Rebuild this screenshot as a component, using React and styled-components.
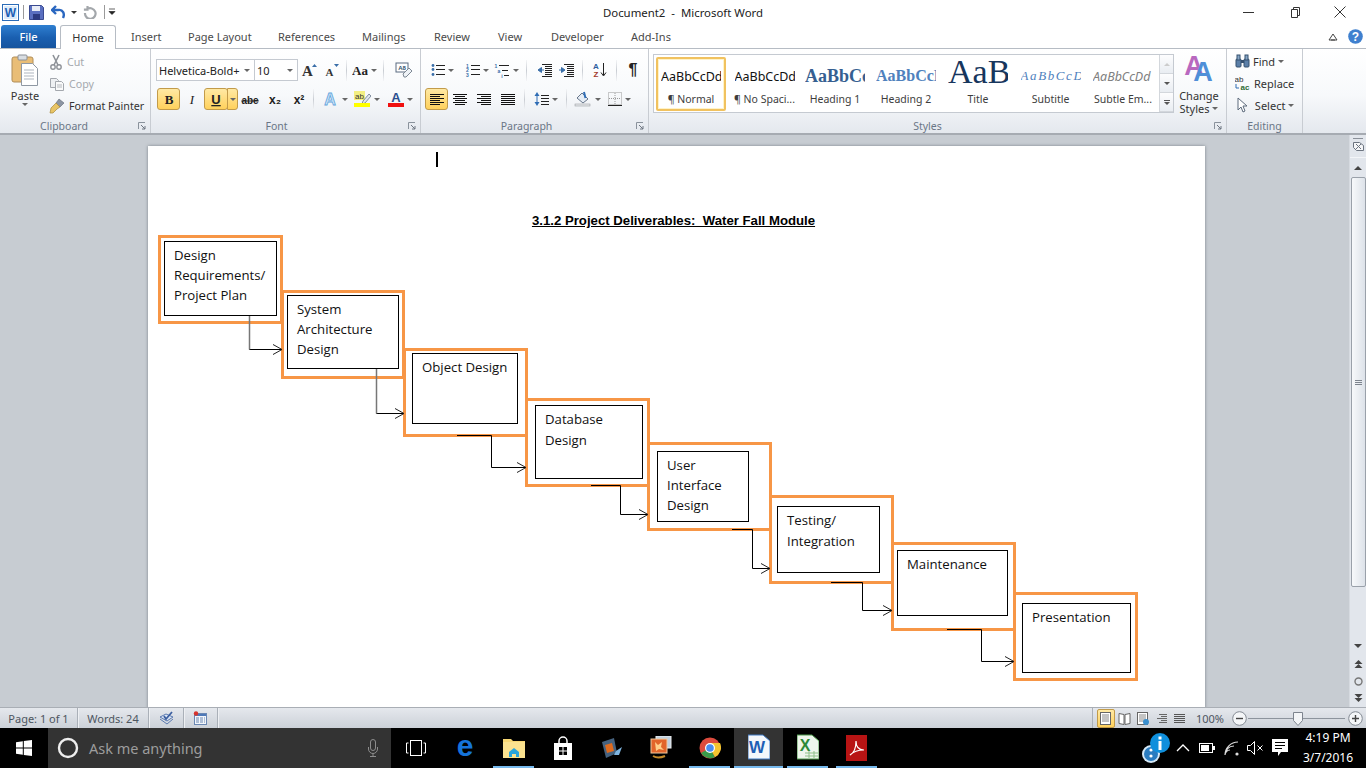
import React from 'react';
import styled, { createGlobalStyle } from 'styled-components';

const uiFont = `'Noto Sans', 'Open Sans', sans-serif`;

const GlobalStyle = createGlobalStyle`
  html, body { margin: 0; padding: 0; width: 1366px; height: 768px; overflow: hidden; background: #fff; }
  body { font-family: ${uiFont}; font-size: 11px; color: #444; }
  * { box-sizing: border-box; }
  svg { display: block; flex: none; }
`;

const Shell = styled.div`
  width: 1366px;
  height: 768px;
  display: flex;
  flex-direction: column;
`;

/* title bar */
const TitleBar = styled.header`
  height: 24px;
  display: grid;
  grid-template-columns: 1fr auto 1fr;
  align-items: center;
  background: #fff;
`;
const Qat = styled.div`
  display: flex;
  align-items: center;
  padding-left: 1px;
`;
const QatSlot = styled.span`
  width: ${p => p.$w}px;
  display: flex;
  justify-content: center;
  align-items: center;
`;
const QatSep = styled.span`
  width: 1px;
  height: 14px;
  margin: 0 ${p => p.$m || 5}px;
  background: #9a9a9a;
`;
const DocTitle = styled.div`
  font-size: 11.4px;
  color: #222;
  white-space: pre;
`;
const WinControls = styled.div`
  display: flex;
  justify-content: flex-end;
  align-items: center;
  padding-right: 3px;
`;
const WinButton = styled.span`
  width: 46px;
  height: 24px;
  display: flex;
  align-items: center;
  justify-content: center;
`;

/* tabs */
const TabRow = styled.nav`
  height: 24px;
  display: flex;
  align-items: flex-end;
  background: #fff;
  position: relative;
  padding-left: 1px;
`;
const FileTab = styled.div`
  width: 55px;
  height: 23px;
  margin-right: 4px;
  border-radius: 3px 3px 0 0;
  background: linear-gradient(#2f7fd0, #1a5fb0 55%, #16549e);
  color: #fff;
  font-size: 11px;
  font-weight: 500;
  display: flex;
  align-items: center;
  justify-content: center;
`;
const Tab = styled.div`
  height: ${p => (p.$active ? 24 : 23)}px;
  width: ${p => p.$w}px;
  display: flex;
  align-items: center;
  justify-content: ${p => (p.$active ? 'center' : 'flex-start')};
  font-size: 11px;
  color: #4a4a4a;
  ${p => p.$active && `
    background: #fff;
    border: 1px solid #b6bcc4;
    border-bottom: none;
    border-radius: 3px 3px 0 0;
    color: #333;
    margin-right: 15px;
    margin-bottom: -1px;
    position: relative;
    z-index: 1;
  `}
`;
const TabTail = styled.div`
  margin-left: auto;
  height: 23px;
  display: flex;
  align-items: center;
  gap: 10px;
  padding-right: 3px;
`;

/* ribbon */
const Ribbon = styled.section`
  height: 87px;
  display: flex;
  border-top: 1px solid #b6bcc4;
  border-bottom: 2px solid #a6abb2;
  background: linear-gradient(#fff, #f7f9fb 55%, #e4e8ee);
`;
const Group = styled.div`
  width: ${p => p.$w}px;
  flex: none;
  display: flex;
  flex-direction: column;
  border-right: 1px solid #c8ccd2;
  position: relative;
`;
const GroupBody = styled.div`
  flex: 1;
  min-height: 0;
  display: flex;
  ${p => p.$col && 'flex-direction: column;'}
  padding: ${p => p.$pad || '0'};
  gap: ${p => p.$gap || 0}px;
`;
const GroupLabel = styled.div`
  height: 15px;
  margin-bottom: -1px;
  line-height: 14px;
  text-align: center;
  font-size: 10.5px;
  color: #6a7686;
  padding-right: ${p => p.$shift || 0}px;
`;
const Launcher = styled.span`
  position: absolute;
  right: 4px;
  bottom: 3px;
`;
const PasteButton = styled.div`
  width: 48px;
  display: flex;
  flex-direction: column;
  align-items: center;
  padding-top: 5px;
  font-size: 11px;
  color: #333;
`;
const PasteLabel = styled.span`
  margin-top: 3px;
  line-height: 14px;
`;
const ClipList = styled.div`
  display: flex;
  flex-direction: column;
  padding-top: 2px;
`;
const ClipItem = styled.div`
  height: 22px;
  display: flex;
  align-items: center;
  gap: 4px;
  color: ${p => (p.$dim ? '#a5a9ae' : '#333')};
  font-size: 10.7px;
  white-space: nowrap;
`;
const ToolRow = styled.div`
  height: ${p => p.$h || 22}px;
  display: flex;
  align-items: center;
`;
const Combo = styled.div`
  width: ${p => p.$w}px;
  height: 22px;
  border: 1px solid #c5cad1;
  background: #fff;
  margin-left: -1px;
  display: flex;
  align-items: center;
  justify-content: space-between;
  padding: 0 4px 0 2px;
  font-size: 11px;
  color: #222;
  white-space: nowrap;
`;
const Tool = styled.span`
  width: ${p => p.$w || 22}px;
  height: 22px;
  flex: none;
  display: flex;
  align-items: center;
  justify-content: center;
  gap: 3px;
  ${p => p.$on && `
    background: linear-gradient(#ffe9a4, #ffd15c);
    border: 1px solid #c29b4a;
    border-radius: 3px;
  `}
`;
const ToolSplit = styled.span`
  width: 11px;
  height: 22px;
  margin-left: -1px;
  display: flex;
  align-items: center;
  justify-content: center;
  background: linear-gradient(#ffe9a4, #ffd15c);
  border: 1px solid #c29b4a;
  border-radius: 0 3px 3px 0;
`;
const Sep = styled.span`
  width: 1px;
  height: 21px;
  flex: none;
  margin: 0 ${p => p.$m || 6}px;
  background: linear-gradient(#f4f5f7, #c9cdd3 50%, #f4f5f7);
`;
const Caret = styled.span`
  width: 0;
  height: 0;
  flex: none;
  border-left: ${p => p.$size || 3}px solid transparent;
  border-right: ${p => p.$size || 3}px solid transparent;
  ${p => (p.$up ? 'border-bottom' : 'border-top')}: ${p => p.$size || 3}px solid ${p => p.$c || '#666'};
`;
const Gallery = styled.div`
  width: 521px;
  height: 59px;
  margin: 5px 0 0 4px;
  border: 1px solid #c5cad1;
  background: #fff;
  display: flex;
  padding: 2px 0 0 2px;
`;
const StyleItem = styled.div`
  width: ${p => p.$w}px;
  height: 54px;
  flex: none;
  display: flex;
  flex-direction: column;
  align-items: center;
  overflow: hidden;
  padding-top: 3px;
  ${p => p.$on && `
    padding-top: 1px;
    margin-right: 3px;
    border: 2px solid #f1c25f;
    box-shadow: inset 0 0 0 1px #fff3c9;
    border-radius: 2px;
  `}
`;
const StyleSample = styled.div`
  height: 32px;
  width: 60px;
  flex: none;
  display: flex;
  align-items: center;
  justify-content: flex-start;
  overflow: hidden;
  white-space: nowrap;
  padding-bottom: ${p => p.$lift || 0}px;
  color: ${p => p.$c || '#111'};
  font-family: ${p => p.$f || `'Noto Sans', sans-serif`};
  font-size: ${p => p.$s || 12}px;
  font-weight: ${p => (p.$b ? 700 : 400)};
  font-style: ${p => (p.$i ? 'italic' : 'normal')};
  letter-spacing: ${p => p.$ls || 0}px;
`;
const StyleName = styled.div`
  font-size: 10.5px;
  line-height: 14px;
  color: #3d3d3d;
  white-space: nowrap;
`;
const GalleryScroll = styled.div`
  width: 14px;
  margin: -2px 0 0 auto;
  display: flex;
  flex-direction: column;
  border-left: 1px solid #d3d7dc;
`;
const GalleryBtn = styled.span`
  flex: 1;
  display: flex;
  align-items: center;
  justify-content: center;
  flex-direction: column;
  gap: 1px;
  background: linear-gradient(#fdfdfe, #e9edf2);
  border-bottom: 1px solid #d3d7dc;
`;
const ChangeStyles = styled.div`
  width: 50px;
  display: flex;
  flex-direction: column;
  align-items: center;
  padding-top: 4px;
  font-size: 11px;
  line-height: 13px;
  color: #333;
  text-align: center;
`;
const ChangeText = styled.span`
  margin-top: 7px;
  display: flex;
  flex-direction: column;
  align-items: center;
`;
const InlineCaret = styled.span`
  display: flex;
  align-items: center;
  gap: 3px;
`;
const EditItem = styled.div`
  height: 22px;
  display: flex;
  align-items: center;
  gap: 3px;
  font-size: 11px;
  color: #333;
`;

/* document */
const Workspace = styled.main`
  flex: 1;
  min-height: 0;
  display: flex;
  background: #c7ccd2;
`;
const DocArea = styled.div`
  flex: 1;
  padding: 11px 0 0 148px;
  overflow: hidden;
`;
const Page = styled.div`
  width: 1057px;
  height: 600px;
  background: #fff;
  box-shadow: 0 0 3px rgba(60, 70, 80, .55);
  position: relative;
`;
const Caretbar = styled.span`
  position: absolute;
  left: 288px;
  top: 6px;
  width: 2px;
  height: 15px;
  background: #000;
`;
const Heading = styled.h3`
  position: absolute;
  left: 0;
  right: 0;
  top: 67px;
  margin: 0;
  padding-right: 6px;
  text-align: center;
  font: 700 13.2px/15px 'Liberation Sans', Arial, sans-serif;
  text-decoration: underline;
  color: #000;
  white-space: pre;
`;
const Frame = styled.div`
  position: absolute;
  left: ${p => p.$x}px;
  top: ${p => p.$y}px;
  width: ${p => p.$w}px;
  height: 89px;
  border: 3px solid #f79646;
`;
const Inner = styled.div`
  position: absolute;
  left: ${p => p.$x}px;
  top: ${p => p.$y}px;
  width: ${p => p.$w}px;
  height: ${p => p.$h}px;
  border: 1px solid #000;
  background: #fff;
  padding: 3px 0 0 9px;
  font: 13.2px/${p => p.$lh || 20}px 'Open Sans', 'Noto Sans', sans-serif;
  color: #111;
  white-space: pre;
`;
const Wires = styled.svg`
  position: absolute;
  left: 0;
  top: 0;
`;
const VScroll = styled.aside`
  width: 17px;
  flex: none;
  display: flex;
  flex-direction: column;
  align-items: center;
  background: #e2e6ec;
  border-left: 1px solid #d6dae0;
`;
const RulerToggle = styled.div`
  width: 100%;
  height: 23px;
  display: flex;
  flex-direction: column;
  align-items: center;
  gap: 2px;
  padding-top: 3px;
  border-bottom: 1px solid #f3f5f8;
`;
const ScrollBtn = styled.div`
  width: 100%;
  height: ${p => p.$h || 16}px;
  display: flex;
  align-items: center;
  justify-content: center;
`;
const Thumb = styled.div`
  width: 15px;
  height: 410px;
  border: 1px solid #9aa1aa;
  border-radius: 2px;
  background: linear-gradient(90deg, #f7f9fb, #dde2e9);
  display: flex;
  align-items: center;
  justify-content: center;
`;
const ScrollFill = styled.div`
  flex: 1;
`;

/* status bar */
const StatusBar = styled.footer`
  height: 21px;
  display: flex;
  align-items: center;
  background: linear-gradient(#e5e8ed, #ccd1d8);
  border-top: 1px solid #a9aeb5;
  font-size: 11px;
  color: #4d5560;
`;
const StatusCell = styled.span`
  height: 100%;
  display: flex;
  align-items: center;
  justify-content: center;
  width: ${p => p.$w}px;
  border-right: 1px solid #aab0b8;
  box-shadow: 1px 0 0 #eef0f3;
`;
const ViewGroup = styled.div`
  margin-left: auto;
  height: 100%;
  display: flex;
  align-items: center;
  border-left: 1px solid #aab0b8;
  padding: 0 3px 0 4px;
`;
const ViewBtn = styled.span`
  width: 18.5px;
  height: 19px;
  display: flex;
  align-items: center;
  justify-content: center;
  ${p => p.$on && `
    background: linear-gradient(#ffe9a4, #ffd15c);
    border: 1px solid #c29b4a;
    border-radius: 2px;
  `}
`;
const Zoom = styled.span`
  width: 40px;
  margin: 0 2px 0 1px;
  text-align: center;
  font-size: 11px;
`;
const ZoomTrack = styled.div`
  width: 97px;
  height: 17px;
  margin: 0 3px 0 1px;
  display: flex;
  align-items: center;
`;
const ZoomLine = styled.div`
  flex: 1;
  height: 1px;
  background: #8d949d;
  position: relative;
`;
const ZoomThumb = styled.span`
  position: absolute;
  left: 45px;
  top: -6px;
`;

/* taskbar */
const Taskbar = styled.div`
  height: 40px;
  display: flex;
  align-items: center;
  background: #000;
`;
const StartBtn = styled.div`
  width: 48px;
  height: 40px;
  display: flex;
  align-items: center;
  justify-content: center;
`;
const SearchBox = styled.div`
  width: 343px;
  height: 40px;
  display: flex;
  align-items: center;
  background: #333;
  color: #9d9d9d;
  font-size: 14.5px;
  padding: 0 12px 0 9px;
`;
const SearchText = styled.span`
  margin-left: 10px;
  flex: 1;
`;
const TaskItem = styled.div`
  width: 49px;
  height: 40px;
  display: flex;
  align-items: center;
  justify-content: center;
  position: relative;
  ${p => p.$current && 'background: #333;'}
  ${p => p.$open && `
    &::after {
      content: '';
      position: absolute;
      left: ${p.$current ? 0 : 4}px;
      right: ${p.$current ? 0 : 4}px;
      bottom: 0;
      height: 2px;
      background: #76b9ed;
    }
  `}
`;
const Tray = styled.div`
  margin-left: auto;
  height: 40px;
  display: flex;
  align-items: center;
  color: #fff;
`;
const TraySlot = styled.span`
  width: ${p => p.$w || 24}px;
  display: flex;
  align-items: center;
  justify-content: center;
`;
const Clock = styled.div`
  width: 66px;
  margin-left: 2px;
  margin-right: 5px;
  text-align: center;
  font-size: 12px;
  line-height: 20px;
  color: #fff;
`;

/* icons */
const Svg = ({ w = 16, h = 16, children }) => (
  <svg width={w} height={h} viewBox={`0 0 ${w} ${h}`}>{children}</svg>
);
const Lines = ({ rows, c = '#222', w = 16, h = 16, children }) => (
  <Svg w={w} h={h}>
    {children}
    {rows.map(([a, b, y], i) => <rect key={i} x={a} y={y} width={b - a} height="1" fill={c} />)}
  </Svg>
);
const WordLogo = () => (
  <Svg w={17} h={17}>
    <rect x=".5" y=".5" width="16" height="16" fill="#fff" stroke="#2b6cb8" />
    <rect x="2" y="2" width="13" height="13" fill="#dcebfa" />
    <text x="8.5" y="13" textAnchor="middle" fontFamily="Liberation Sans" fontWeight="700" fontSize="12" fill="#1d5fb5">W</text>
  </Svg>
);
const Launch = () => (
  <Svg w={8} h={8}>
    <path d="M.5 7V.5H7" fill="none" stroke="#8a929c" />
    <path d="M3 3l4 4M7 4v3H4" fill="none" stroke="#6d7580" />
  </Svg>
);
const ClipboardIcon = () => (
  <Svg w={28} h={32}>
    <rect x="1" y="3" width="21" height="25" rx="2" fill="#e9bd76" stroke="#b08d58" />
    <rect x="7" y="1" width="9" height="5" rx="1" fill="#d8dde2" stroke="#8a8f96" />
    <path d="M10.5 9.5h11l5 5v17h-16z" fill="#fff" stroke="#8f98a3" />
    <path d="M13 16h10M13 19h10M13 22h10M13 25h10" stroke="#aeb5bf" />
  </Svg>
);
const Scissors = () => (
  <Svg w={14} h={16}>
    <path d="M4 1l5 10M10 1L5 11" stroke="#8e9298" strokeWidth="1.6" fill="none" />
    <circle cx="4" cy="13" r="2.2" fill="none" stroke="#8e9298" strokeWidth="1.4" />
    <circle cx="10" cy="13" r="2.2" fill="none" stroke="#8e9298" strokeWidth="1.4" />
  </Svg>
);
const CopyIcon = () => (
  <Svg w={16} h={14}>
    <path d="M1.5 1.5h6l2 2v7h-8z" fill="#eef0f2" stroke="#a4a8ae" />
    <path d="M6.5 4.5h6l2 2v7h-8z" fill="#fafafa" stroke="#a4a8ae" />
    <path d="M8 8h5M8 10h5" stroke="#b4b8bd" />
  </Svg>
);
const Brush = () => (
  <Svg w={16} h={16}>
    <path d="M10 1l5 4-4 4-4-4z" fill="#8c95a3" stroke="#5f6874" strokeWidth=".6" />
    <path d="M7 5l4 4-3 2-4 4H1l1-5z" fill="#e8c465" stroke="#a88a3c" strokeWidth=".7" />
  </Svg>
);
const TextGlyph = ({ t, s = 14, b, i, u, c = '#222', f = 'Liberation Serif', w = 16, strike, y = 13 }) => (
  <Svg w={w} h={16}>
    <text x={w / 2} y={y} textAnchor="middle" fontFamily={f} fontWeight={b ? 700 : 400} fontStyle={i ? 'italic' : 'normal'} fontSize={s} fill={c} textDecoration={u ? 'underline' : strike ? 'line-through' : 'none'}>{t}</text>
  </Svg>
);
const GrowA = ({ up }) => (
  <Svg w={16} h={16}>
    <text x="6.5" y="14" textAnchor="middle" fontFamily="Liberation Serif" fontWeight="700" fontSize={up ? 15 : 11} fill="#333">A</text>
    <path d={up ? 'M11 5l2.5-3L16 5z' : 'M11 2h5l-2.5 3z'} fill="#3a6ea8" />
  </Svg>
);
const EraserIcon = () => (
  <Svg w={18} h={16}>
    <rect x="1" y="1" width="12" height="9" fill="#fff" stroke="#5a6b80" />
    <text x="7" y="8" textAnchor="middle" fontFamily="Liberation Sans" fontSize="6" fontWeight="700" fill="#33506e">A8</text>
    <path d="M8 12l6-6 3 3-6 6H9z" fill="#eef2f6" stroke="#7d8894" />
  </Svg>
);
const Bullets = () => (
  <Lines w={14} h={14} rows={[[5, 14, 2], [5, 14, 6], [5, 14, 11]]}>
    <circle cx="2" cy="2.5" r="1.4" fill="#3a6ea8" />
    <circle cx="2" cy="6.5" r="1.4" fill="#3a6ea8" />
    <circle cx="2" cy="11.5" r="1.4" fill="#3a6ea8" />
  </Lines>
);
const Numbered = () => (
  <Lines w={15} h={14} rows={[[6, 15, 2], [6, 15, 6], [6, 15, 11]]}>
    <text x="2.5" y="5" textAnchor="middle" fontSize="5" fontWeight="700" fontFamily="Liberation Sans" fill="#3a6ea8">1</text>
    <text x="2.5" y="9" textAnchor="middle" fontSize="5" fontWeight="700" fontFamily="Liberation Sans" fill="#3a6ea8">2</text>
    <text x="2.5" y="14" textAnchor="middle" fontSize="5" fontWeight="700" fontFamily="Liberation Sans" fill="#3a6ea8">3</text>
  </Lines>
);
const Multi = () => (
  <Lines w={16} h={15} rows={[[5, 15, 2], [8, 14, 7], [10, 15, 12]]}>
    <text x="2" y="5" textAnchor="middle" fontSize="5" fontWeight="700" fontFamily="Liberation Sans" fill="#3a6ea8">1</text>
    <text x="5" y="10" textAnchor="middle" fontSize="5" fontWeight="700" fontFamily="Liberation Sans" fill="#3a6ea8">a</text>
    <text x="8" y="15" textAnchor="middle" fontSize="5" fontWeight="700" fontFamily="Liberation Sans" fill="#3a6ea8">i</text>
  </Lines>
);
const IndentIcon = ({ flip }) => (
  <Lines w={15} h={14} rows={[[5, 15, 1], [8, 15, 3], [8, 15, 5], [8, 15, 7], [8, 15, 9], [8, 15, 11], [5, 15, 13]]}>
    <path d={flip ? 'M0 7h4M2.5 4.5L6 7l-3.5 2.5z' : 'M7 7H3M4.5 4.5L1 7l3.5 2.5z'} fill="#3a6ea8" stroke="#3a6ea8" />
  </Lines>
);
const SortIcon = () => (
  <Svg w={16} h={16}>
    <text x="5" y="7" textAnchor="middle" fontFamily="Liberation Sans" fontWeight="700" fontSize="8" fill="#2d5f9e">A</text>
    <text x="5" y="15" textAnchor="middle" fontFamily="Liberation Sans" fontWeight="700" fontSize="8" fill="#a33a2b">Z</text>
    <path d="M12.5 1v12M10 10.5l2.5 3.5 2.5-3.5" fill="none" stroke="#222" />
  </Svg>
);
const Align = ({ rows }) => <Lines w={16} h={13} rows={rows} c="#111" />;
const leftRows = [[1, 15, 1], [1, 11, 3], [1, 15, 5], [1, 11, 7], [1, 15, 9], [1, 11, 11]];
const centerRows = [[1, 15, 1], [3, 13, 3], [1, 15, 5], [3, 13, 7], [1, 15, 9], [3, 13, 11]];
const rightRows = [[1, 15, 1], [5, 15, 3], [1, 15, 5], [5, 15, 7], [1, 15, 9], [5, 15, 11]];
const justRows = [[1, 15, 1], [1, 15, 3], [1, 15, 5], [1, 15, 7], [1, 15, 9], [1, 15, 11]];
const LineSpacing = () => (
  <Lines w={15} h={16} rows={[[7, 15, 4], [7, 15, 7], [7, 15, 10], [7, 15, 13]]}>
    <path d="M3 1l2.5 4h-5zM3 15l2.5-4h-5z" fill="#2f6db5" />
    <path d="M3 4v8" stroke="#2f6db5" />
  </Lines>
);
const Shading = () => (
  <Svg w={18} h={16}>
    <path d="M8 2l6 6-5 4-6-5z" fill="#e6edf5" stroke="#66758a" />
    <path d="M10 1l1.5 6" stroke="#2f6db5" strokeWidth="2" />
    <rect x="1" y="13" width="15" height="2" fill="#e8eaec" stroke="#8b8f95" strokeWidth=".5" />
  </Svg>
);
const BorderIcon = () => (
  <Svg w={14} h={14}>
    <rect x=".5" y=".5" width="13" height="12" fill="none" stroke="#999" strokeDasharray="1 1" />
    <path d="M7 1v12M1 6.5h12" stroke="#999" strokeDasharray="1 1" />
    <path d="M0 13.5h14" stroke="#222" />
  </Svg>
);
const TextEffects = () => (
  <Svg w={18} h={16}>
    <text x="9" y="14" textAnchor="middle" fontFamily="Liberation Sans" fontWeight="700" fontSize="16" fill="#cfe5f8" stroke="#63a5dc" strokeWidth=".8">A</text>
  </Svg>
);
const Highlight = () => (
  <Svg w={17} h={16}>
    <rect x="0" y="0" width="11" height="9" fill="#f3ef82" />
    <text x="5.5" y="8" textAnchor="middle" fontFamily="Liberation Sans" fontSize="8" fill="#333">ab</text>
    <path d="M9 10l6-7 2 2-6 7-3 1z" fill="#dfe6ee" stroke="#56677d" strokeWidth=".7" />
    <rect x="0" y="12" width="16" height="4" fill="#ffff00" />
  </Svg>
);
const FontColor = () => (
  <Svg w={16} h={16}>
    <text x="8" y="11" textAnchor="middle" fontFamily="Liberation Sans" fontWeight="700" fontSize="13" fill="#2a4f8f">A</text>
    <rect x="0" y="12" width="16" height="4" fill="#f01010" />
  </Svg>
);
const ChangeStylesIcon = () => (
  <Svg w={32} h={29}>
    <text x="11" y="22" textAnchor="middle" fontFamily="Liberation Sans" fontWeight="700" fontSize="27" fill="#b868bf">A</text>
    <text x="20" y="28" textAnchor="middle" fontFamily="Liberation Sans" fontWeight="700" fontSize="27" fill="#4f8fd8">A</text>
  </Svg>
);
const Binoculars = () => (
  <Svg w={15} h={15}>
    <rect x="1" y="5" width="5" height="8" rx="1" fill="#5b7fa8" stroke="#35506f" />
    <rect x="9" y="5" width="5" height="8" rx="1" fill="#5b7fa8" stroke="#35506f" />
    <rect x="2" y="1" width="3" height="5" fill="#87a6c6" stroke="#35506f" />
    <rect x="10" y="1" width="3" height="5" fill="#87a6c6" stroke="#35506f" />
    <rect x="6" y="6" width="3" height="3" fill="#35506f" />
  </Svg>
);
const ReplaceIcon = () => (
  <Svg w={16} h={16}>
    <text x="4" y="7" textAnchor="middle" fontFamily="Liberation Sans" fontSize="8" fill="#333">ab</text>
    <text x="10" y="15" textAnchor="middle" fontFamily="Liberation Sans" fontWeight="700" fontSize="8" fill="#2e6a32">ac</text>
    <path d="M1 9v4h3" fill="none" stroke="#2f6db5" />
  </Svg>
);
const SelectIcon = () => (
  <Svg w={14} h={16}>
    <path d="M3 1v12l3-3 2 5 2-1-2-5h4z" fill="#fff" stroke="#5d6b7c" />
  </Svg>
);
const HelpIcon = () => (
  <Svg w={15} h={15}>
    <circle cx="7.5" cy="7.5" r="7.3" fill="#3f80cf" />
    <text x="7.5" y="12" textAnchor="middle" fontFamily="Liberation Sans" fontWeight="700" fontSize="12" fill="#fff">?</text>
  </Svg>
);
const PageView = ({ book, web, outline, draft }) => (
  <Lines w={13} h={13} c={draft ? '#555' : '#666'} rows={draft ? [[1, 12, 2], [1, 12, 4], [1, 12, 6], [1, 12, 8], [1, 12, 10]] : outline ? [[4, 12, 2], [6, 12, 4], [2, 12, 6], [6, 12, 8], [4, 12, 10]] : []}>
    {!draft && !outline && !book && <rect x="1.5" y=".5" width="10" height="12" fill="#fff" stroke="#666" />}
    {!draft && !outline && !book && <path d="M3 3h7M3 5h7M3 7h7M3 9h7" stroke="#888" />}
    {book && <path d="M1 1.5l5 1v10l-5-1zM12 1.5l-5 1v10l5-1z" fill="#fff" stroke="#666" />}
    {web && <circle cx="10" cy="10" r="3" fill="#3a8fcf" />}
  </Lines>
);
const ZoomCircle = ({ plus }) => (
  <Svg w={15} h={15}>
    <circle cx="7.5" cy="7.5" r="6.8" fill="#f4f6f8" stroke="#848b94" />
    <path d={plus ? 'M4 7.5h7M7.5 4v7' : 'M4 7.5h7'} stroke="#444" strokeWidth="1.4" />
  </Svg>
);
const ProofIcon = () => (
  <Svg w={17} h={16}>
    <path d="M2 7l6-3 7 3-6 4z" fill="#dbe5f4" stroke="#5b7ab0" />
    <path d="M2 9l7 5 6-5" fill="none" stroke="#5b7ab0" />
    <path d="M6 6l2 3 6-7" fill="none" stroke="#3c5fa0" strokeWidth="1.8" />
  </Svg>
);
const MacroIcon = () => (
  <Svg w={15} h={15}>
    <rect x="1.5" y="2.5" width="12" height="11" fill="#f3f6fa" stroke="#6a87b3" />
    <rect x="2" y="3" width="11" height="2" fill="#4d78b8" />
    <path d="M3 7h9M3 9h9M3 11h9" stroke="#6a87b3" strokeDasharray="3 1" />
    <circle cx="3" cy="2.5" r="2.2" fill="#d8332c" />
  </Svg>
);

/* taskbar icons */
const WinLogo = () => (
  <Svg w={16} h={16}>
    <path d="M0 2.2L6.8 1.2V7.5H0zM7.8 1L16 0V7.5H7.8zM0 8.5H6.8V14.8L0 13.8zM7.8 8.5H16V16L7.8 15z" fill="#fff" />
  </Svg>
);
const Cortana = () => (
  <Svg w={22} h={22}>
    <circle cx="11" cy="11" r="9" fill="none" stroke="#eee" strokeWidth="2.4" />
  </Svg>
);
const Mic = () => (
  <Svg w={12} h={20}>
    <rect x="3.5" y="1.5" width="5" height="11" rx="2.5" fill="none" stroke="#8d8d8d" />
    <path d="M1.5 9v2a4.5 4.5 0 009 0V9M6 15.5V18M3 18.5h6" fill="none" stroke="#8d8d8d" />
  </Svg>
);
const TaskView = () => (
  <Svg w={20} h={16}>
    <rect x="4.5" y=".5" width="11" height="15" fill="none" stroke="#fff" />
    <path d="M2.5 3H.5v10h2M17.5 3h2v10h-2" fill="none" stroke="#fff" />
  </Svg>
);
const Edge = () => (
  <Svg w={22} h={24}>
    <text x="11" y="20" textAnchor="middle" fontFamily="Liberation Sans" fontWeight="700" fontSize="30" fill="#1573d9">e</text>
  </Svg>
);
const Explorer = () => (
  <Svg w={22} h={20}>
    <path d="M0 1h8l2 2h12v17H0z" fill="#f7d774" />
    <rect x="0" y="4" width="22" height="16" fill="#fbe28f" />
    <path d="M6 19v-5l5-4 5 4v5h-3v-3H9v3z" fill="#2aa5dc" />
  </Svg>
);
const Store = () => (
  <Svg w={20} h={24}>
    <path d="M6 7V5a4 4 0 018 0v2" fill="none" stroke="#fff" strokeWidth="1.5" />
    <path d="M1 7h18v17H1z" fill="#fff" />
    <path d="M6 11h3.5v3.5H6zM10.5 11H14v3.5h-3.5zM6 15.5h3.5V19H6zM10.5 15.5H14V19h-3.5z" fill="#000" />
  </Svg>
);
const MovieMaker = () => (
  <Svg w={24} h={24}>
    <path d="M2 6l12-4 3 15-11 5z" fill="#46627e" />
    <path d="M5 9l7-2 2 8-7 2z" fill="#df6b1f" />
    <path d="M16 15l6-4-3 8h-5z" fill="#7fb5e0" />
  </Svg>
);
const PhotoIcon = () => (
  <Svg w={22} h={24}>
    <rect x="6" y="0" width="15" height="12" fill="#bfd0e0" stroke="#eee" />
    <rect x="1" y="3" width="16" height="14" fill="#e2652a" stroke="#eec9a0" />
    <path d="M5 6l3 3 4-3-1 5 3 3-5-1-3 2z" fill="#ffcf8a" />
    <path d="M3 20q5 3 12 0" fill="none" stroke="#c58b2a" strokeWidth="2" />
  </Svg>
);
const Chrome = () => (
  <Svg w={22} h={22}>
    <circle cx="11" cy="11" r="10.5" fill="#dd4b3e" />
    <path d="M11 11L2 16a10.5 10.5 0 0014 4z" fill="#3a9b4a" />
    <path d="M11 11l5 9A10.5 10.5 0 0021 6H11z" fill="#f4c430" />
    <circle cx="11" cy="11" r="5" fill="#fff" />
    <circle cx="11" cy="11" r="3.8" fill="#4a8cf0" />
  </Svg>
);
const WordTask = () => (
  <Svg w={22} h={28}>
    <path d="M0 1h15l7 6v18H0z" fill="#f4f7fb" stroke="#3f78c2" />
    <text x="9" y="19" textAnchor="middle" fontFamily="Liberation Sans" fontWeight="700" fontSize="17" fill="#1f5fb5">W</text>
  </Svg>
);
const ExcelTask = () => (
  <Svg w={22} h={28}>
    <path d="M0 1h15l7 6v18H0z" fill="#eef6ec" stroke="#4e9a4c" />
    <text x="8" y="17" textAnchor="middle" fontFamily="Liberation Sans" fontWeight="700" fontSize="16" fill="#2d8a39">X</text>
    <path d="M8 19h13M8 22h13M12 17v7M17 17v7" stroke="#8fc08a" />
  </Svg>
);
const AcrobatTask = () => (
  <Svg w={21} h={26}>
    <rect width="21" height="26" fill="#b81414" />
    <path d="M4 20c4-2 6-8 6-14 0 6 3 9 8 9-5 0-10 1-14 5z" fill="none" stroke="#fff" strokeWidth="1.2" />
  </Svg>
);
const InfoBadge = () => (
  <Svg w={28} h={36}>
    <circle cx="9" cy="24" r="9" fill="#d6e9f7" />
    <circle cx="9" cy="24" r="7" fill="#2a7cc0" />
    <circle cx="9" cy="20" r="1.6" fill="#fff" />
    <circle cx="9" cy="26" r="1.6" fill="#fff" />
    <circle cx="18" cy="13" r="10" fill="#0f8fdc" />
    <rect x="16.5" y="11" width="3" height="9" fill="#fff" />
    <rect x="16.5" y="6.5" width="3" height="3" fill="#fff" />
  </Svg>
);
const Chevron = () => (
  <Svg w={14} h={8}><path d="M1 7l6-6 6 6" fill="none" stroke="#fff" strokeWidth="1.3" /></Svg>
);
const Battery = () => (
  <Svg w={16} h={10}>
    <rect x=".5" y=".5" width="13" height="9" fill="none" stroke="#fff" />
    <rect x="2" y="2" width="8" height="6" fill="#fff" />
    <rect x="14" y="3" width="2" height="4" fill="#fff" />
  </Svg>
);
const Wifi = () => (
  <Svg w={15} h={15}>
    <path d="M1 14A13 13 0 0114 1M1 14A9 9 0 0110 5M1 14a5 5 0 015-5" fill="none" stroke="#ddd" strokeWidth="1.2" />
    <circle cx="13" cy="13" r="1.6" fill="#ddd" />
  </Svg>
);
const Mute = () => (
  <Svg w={17} h={14}>
    <path d="M.5 4.5h3l4-4v13l-4-4h-3z" fill="none" stroke="#fff" />
    <path d="M10.5 4.5l5 5M15.5 4.5l-5 5" stroke="#fff" />
  </Svg>
);
const Notify = () => (
  <Svg w={16} h={18}>
    <path d="M0 0h16v13H9l-3 4v-4H0z" fill="#fff" />
    <path d="M3 3.5h10M3 6.5h10M3 9.5h7" stroke="#000" />
  </Svg>
);

const serif = `'Liberation Serif', serif`;

const styleItems = [
  { name: '¶ Normal', sample: 'AaBbCcDd', on: true, w: 70, s: 12.5 },
  { name: '¶ No Spaci...', sample: 'AaBbCcDd', w: 71, s: 12.5 },
  { name: 'Heading 1', sample: 'AaBbCcDd', f: serif, s: 18, b: true, c: '#365f91', w: 70 },
  { name: 'Heading 2', sample: 'AaBbCcDd', f: serif, s: 16, b: true, c: '#4f81bd', w: 72 },
  { name: 'Title', sample: 'AaBbCc', f: serif, s: 34, c: '#17365d', w: 72, lift: 8 },
  { name: 'Subtitle', sample: 'AaBbCcDd', f: serif, s: 13, i: true, c: '#4f81bd', ls: 1.6, w: 73 },
  { name: 'Subtle Em...', sample: 'AaBbCcDd', s: 12.5, i: true, c: '#808080', w: 72 },
];

const frames = [
  { x: 10, y: 89, w: 125 },
  { x: 133, y: 144, w: 124 },
  { x: 255, y: 202, w: 125 },
  { x: 377, y: 252, w: 125 },
  { x: 499, y: 296, w: 125 },
  { x: 621, y: 349, w: 125 },
  { x: 743, y: 396, w: 125 },
  { x: 865, y: 446, w: 125 },
];

const boxes = [
  { x: 16, y: 95, w: 113, h: 75, text: 'Design\nRequirements/\nProject Plan' },
  { x: 139, y: 149, w: 112, h: 74, text: 'System\nArchitecture\nDesign' },
  { x: 264, y: 207, w: 106, h: 71, text: 'Object Design' },
  { x: 387, y: 259, w: 108, h: 74, lh: 21, text: 'Database\nDesign' },
  { x: 509, y: 305, w: 92, h: 71, text: 'User\nInterface\nDesign' },
  { x: 629, y: 360, w: 103, h: 67, lh: 21, text: 'Testing/\nIntegration' },
  { x: 749, y: 404, w: 111, h: 66, text: 'Maintenance' },
  { x: 874, y: 457, w: 109, h: 70, text: 'Presentation' },
];

// connector paths, page coordinates
const wires = [
  { d: 'M101.5 170V203.5H134', grey: true },
  { d: 'M228.5 223V267.5H256', grey: true },
  { d: 'M309 289.5H343.5V321.5H378' },
  { d: 'M443 339.5H472.5V368.5H500' },
  { d: 'M584 383.5H604.5V422.5H622' },
  { d: 'M683 436.5H714.5V464.5H744' },
  { d: 'M799 483.5H833.5V515.5H866' },
];
const arrowTips = [[134, 203.5], [256, 267.5], [378, 321.5], [500, 368.5], [622, 422.5], [744, 464.5], [866, 515.5]];

const Diagram = () => (
  <>
    {frames.map((f, i) => <Frame key={i} $x={f.x} $y={f.y} $w={f.w} />)}
    {boxes.map((b, i) => <Inner key={i} $x={b.x} $y={b.y} $w={b.w} $h={b.h} $lh={b.lh}>{b.text}</Inner>)}
    <Wires width="1057" height="600">
      {wires.map((w, i) => (
        <g key={i} fill="none" stroke="#000">
          <path d={w.d} />
          {w.grey && <path d={w.d.split('H')[0]} stroke="#777" strokeWidth="1.5" />}
        </g>
      ))}
      {arrowTips.map(([x, y], i) => (
        <path key={i} d={`M${x - 9} ${y - 5}L${x} ${y}L${x - 9} ${y + 5}`} fill="none" stroke="#222" />
      ))}
    </Wires>
  </>
);

const RibbonBar = () => (
  <Ribbon>
    <Group $w={151}>
      <GroupBody $pad="0 0 0 1px">
        <PasteButton>
          <ClipboardIcon />
          <PasteLabel>Paste</PasteLabel>
          <Caret />
        </PasteButton>
        <ClipList>
          <ClipItem $dim><Scissors />Cut</ClipItem>
          <ClipItem $dim><CopyIcon />Copy</ClipItem>
          <ClipItem><Brush />Format Painter</ClipItem>
        </ClipList>
      </GroupBody>
      <GroupLabel $shift={22}>Clipboard</GroupLabel>
      <Launcher><Launch /></Launcher>
    </Group>
    <Group $w={270}>
      <GroupBody $col $pad="10px 0 0 6px" $gap={7}>
        <ToolRow>
          <Combo $w={99}>Helvetica-Bold+<Caret /></Combo>
          <Combo $w={44}>10<Caret /></Combo>
          <Tool $w={22}><GrowA up /></Tool>
          <Tool $w={22}><GrowA /></Tool>
          <Sep $m={4} />
          <Tool $w={26}><TextGlyph t="Aa" s={13} b w={16} /><Caret /></Tool>
          <Sep $m={6} />
          <Tool $w={28}><EraserIcon /></Tool>
        </ToolRow>
        <ToolRow>
          <Tool $w={23} $on><TextGlyph t="B" s={13} b /></Tool>
          <Tool $w={24}><TextGlyph t="I" s={13} i /></Tool>
          <Tool $w={24} $on><TextGlyph t="U" s={13} b u c="#222" f="Liberation Sans" /></Tool>
          <ToolSplit><Caret /></ToolSplit>
          <Tool $w={23}><TextGlyph t="abe" s={10} strike f="Liberation Sans" b w={18} /></Tool>
          <Tool $w={28}><TextGlyph t="x₂" s={12} b f="Liberation Sans" w={18} /></Tool>
          <Tool $w={19}><TextGlyph t="x²" s={12} b f="Liberation Sans" w={18} /></Tool>
          <Sep $m={5} />
          <Tool $w={30}><TextEffects /><Caret /></Tool>
          <Tool $w={35}><Highlight /><Caret /></Tool>
          <Tool $w={33}><FontColor /><Caret /></Tool>
        </ToolRow>
      </GroupBody>
      <GroupLabel $shift={18}>Font</GroupLabel>
      <Launcher><Launch /></Launcher>
    </Group>
    <Group $w={228}>
      <GroupBody $col $pad="10px 0 0 4px" $gap={7}>
        <ToolRow>
          <Tool $w={35}><Bullets /><Caret /></Tool>
          <Tool $w={34}><Numbered /><Caret /></Tool>
          <Tool $w={25}><Multi /><Caret /></Tool>
          <Sep $m={6.5} />
          <Tool $w={22}><IndentIcon /></Tool>
          <Tool $w={22}><IndentIcon flip /></Tool>
          <Sep $m={5} />
          <Tool $w={22}><SortIcon /></Tool>
          <Sep $m={5.5} />
          <Tool $w={22}><TextGlyph t="¶" s={16} b f="Liberation Sans" /></Tool>
        </ToolRow>
        <ToolRow>
          <Tool $w={23} $on><Align rows={leftRows} /></Tool>
          <Tool $w={24}><Align rows={centerRows} /></Tool>
          <Tool $w={24}><Align rows={rightRows} /></Tool>
          <Tool $w={23}><Align rows={justRows} /></Tool>
          <Sep $m={5} />
          <Tool $w={32}><LineSpacing /><Caret /></Tool>
          <Sep $m={4} />
          <Tool $w={33}><Shading /><Caret /></Tool>
          <Tool $w={30}><BorderIcon /><Caret /></Tool>
        </ToolRow>
      </GroupBody>
      <GroupLabel $shift={16}>Paragraph</GroupLabel>
      <Launcher><Launch /></Launcher>
    </Group>
    <Group $w={578}>
      <GroupBody>
        <Gallery>
          {styleItems.map(s => (
            <StyleItem key={s.name} $on={s.on} $w={s.w}>
              <StyleSample $c={s.c} $f={s.f} $s={s.s} $b={s.b} $i={s.i} $ls={s.ls} $lift={s.lift}>{s.sample}</StyleSample>
              <StyleName>{s.name}</StyleName>
            </StyleItem>
          ))}
          <GalleryScroll>
            <GalleryBtn><Caret $up $c="#ccc" /></GalleryBtn>
            <GalleryBtn><Caret $c="#555" /></GalleryBtn>
            <GalleryBtn><Lines w={6} h={1} c="#555" rows={[[0, 6, 0]]} /><Caret $c="#555" /></GalleryBtn>
          </GalleryScroll>
        </Gallery>
        <ChangeStyles>
          <ChangeStylesIcon />
          <ChangeText>
            Change
            <InlineCaret>Styles <Caret /></InlineCaret>
          </ChangeText>
        </ChangeStyles>
      </GroupBody>
      <GroupLabel $shift={20}>Styles</GroupLabel>
      <Launcher><Launch /></Launcher>
    </Group>
    <Group $w={76}>
      <GroupBody $col $pad="1px 0 0 8px">
        <EditItem><Binoculars />Find <Caret /></EditItem>
        <EditItem><ReplaceIcon />Replace</EditItem>
        <EditItem><SelectIcon />&nbsp;Select <Caret /></EditItem>
      </GroupBody>
      <GroupLabel>Editing</GroupLabel>
    </Group>
  </Ribbon>
);

const App = () => (
  <Shell>
    <GlobalStyle />
    <TitleBar>
      <Qat>
        <QatSlot $w={19}><WordLogo /></QatSlot>
        <QatSep $m={3} />
        <QatSlot $w={18}>
          <Svg w={15} h={15}>
            <path d="M.5.5h12l2 2v12H.5z" fill="#5a6fc0" stroke="#3a4a90" />
            <rect x="3" y="1" width="8" height="5" fill="#e8ecf6" />
            <rect x="4" y="9" width="7" height="6" fill="#2c3a80" />
          </Svg>
        </QatSlot>
        <QatSlot $w={26}>
          <Svg w={14} h={14}><path d="M12 13c2-4 0-9-5-8H2M5 1L1 5l4 4" fill="none" stroke="#2a67c0" strokeWidth="2.4" /></Svg>
        </QatSlot>
        <Caret $c="#333" />
        <QatSlot $w={26}>
          <Svg w={14} h={14}><path d="M4.2 4.2A5.3 5.3 0 112 8M4.5 1v3.6H.9" fill="none" stroke="#a3a7ab" strokeWidth="2.2" /></Svg>
        </QatSlot>
        <QatSep $m={1} />
        <QatSlot $w={12}>
          <Svg w={8} h={8}><path d="M1 1h6M1 3.5h6l-3 3z" fill="#222" stroke="#222" strokeWidth=".7" /></Svg>
        </QatSlot>
      </Qat>
      <DocTitle>Document2  -  Microsoft Word</DocTitle>
      <WinControls>
        <WinButton><Svg w={11} h={11}><path d="M0 5.5h11" stroke="#333" /></Svg></WinButton>
        <WinButton><Svg w={11} h={11}><path d="M2.5 2.5h6v8h-6zM4.5 2.5V.5h6v8h-2" fill="none" stroke="#333" /></Svg></WinButton>
        <WinButton><Svg w={12} h={12}><path d="M.5.5l11 11M11.5.5l-11 11" stroke="#333" /></Svg></WinButton>
      </WinControls>
    </TitleBar>
    <TabRow>
      <FileTab>File</FileTab>
      <Tab $active $w={56}>Home</Tab>
      <Tab $w={57}>Insert</Tab>
      <Tab $w={90}>Page Layout</Tab>
      <Tab $w={84}>References</Tab>
      <Tab $w={72}>Mailings</Tab>
      <Tab $w={64}>Review</Tab>
      <Tab $w={53}>View</Tab>
      <Tab $w={80}>Developer</Tab>
      <Tab $w={60}>Add-Ins</Tab>
      <TabTail>
        <Svg w={10} h={8}><path d="M1 7l4-6 4 6z M3 7h4" fill="none" stroke="#444" /></Svg>
        <HelpIcon />
      </TabTail>
    </TabRow>
    <RibbonBar />
    <Workspace>
      <DocArea>
        <Page>
          <Caretbar />
          <Heading>3.1.2 Project Deliverables:  Water Fall Module</Heading>
          <Diagram />
        </Page>
      </DocArea>
      <VScroll>
        <RulerToggle>
          <Lines w={10} h={1} c="#8a9099" rows={[[0, 10, 0]]} />
          <Svg w={11} h={11}><path d="M.5 1.5h6l4 3v5h-7l-3-3z" fill="#f5f6f8" stroke="#6c7480" /><path d="M3 3l5 5M8 3L3 8" stroke="#6c7480" /></Svg>
        </RulerToggle>
        <ScrollBtn $h={19}><Caret $up $size={4} $c="#444" /></ScrollBtn>
        <Thumb><Lines w={7} h={7} c="#7d848e" rows={[[0, 7, 1], [0, 7, 3], [0, 7, 5]]} /></Thumb>
        <ScrollFill />
        <ScrollBtn $h={18}><Caret $size={4} $c="#444" /></ScrollBtn>
        <ScrollBtn $h={18}>
          <Svg w={9} h={9}><path d="M4.5 0l4 4h-8zM4.5 4l4 4h-8z" fill="#444" /></Svg>
        </ScrollBtn>
        <ScrollBtn $h={16}><Svg w={9} h={9}><circle cx="4.5" cy="4.5" r="3.5" fill="none" stroke="#777" strokeWidth="1.4" /></Svg></ScrollBtn>
        <ScrollBtn $h={18}>
          <Svg w={9} h={9}><path d="M.5 0h8l-4 4zM.5 4h8l-4 4z" fill="#444" /></Svg>
        </ScrollBtn>
      </VScroll>
    </Workspace>
    <StatusBar>
      <StatusCell $w={78}>Page: 1 of 1</StatusCell>
      <StatusCell $w={71}>Words: 24</StatusCell>
      <StatusCell $w={35}><ProofIcon /></StatusCell>
      <StatusCell $w={34}><MacroIcon /></StatusCell>
      <ViewGroup>
        <ViewBtn $on><PageView /></ViewBtn>
        <ViewBtn><PageView book /></ViewBtn>
        <ViewBtn><PageView web /></ViewBtn>
        <ViewBtn><PageView outline /></ViewBtn>
        <ViewBtn><PageView draft /></ViewBtn>
        <Zoom>100%</Zoom>
        <ZoomCircle />
        <ZoomTrack>
          <ZoomLine>
            <ZoomThumb>
              <Svg w={10} h={14}><path d="M.5.5h9v8l-4.5 5-4.5-5z" fill="#f3f5f7" stroke="#7d848e" /></Svg>
            </ZoomThumb>
          </ZoomLine>
        </ZoomTrack>
        <ZoomCircle plus />
      </ViewGroup>
    </StatusBar>
    <Taskbar>
      <StartBtn><WinLogo /></StartBtn>
      <SearchBox>
        <Cortana />
        <SearchText>Ask me anything</SearchText>
        <Mic />
      </SearchBox>
      <TaskItem><TaskView /></TaskItem>
      <TaskItem><Edge /></TaskItem>
      <TaskItem $open><Explorer /></TaskItem>
      <TaskItem><Store /></TaskItem>
      <TaskItem><MovieMaker /></TaskItem>
      <TaskItem><PhotoIcon /></TaskItem>
      <TaskItem $open><Chrome /></TaskItem>
      <TaskItem $open $current><WordTask /></TaskItem>
      <TaskItem $open><ExcelTask /></TaskItem>
      <TaskItem $open><AcrobatTask /></TaskItem>
      <Tray>
        <TraySlot $w={30}><InfoBadge /></TraySlot>
        <TraySlot><Chevron /></TraySlot>
        <TraySlot><Battery /></TraySlot>
        <TraySlot><Wifi /></TraySlot>
        <TraySlot><Mute /></TraySlot>
        <TraySlot $w={26}><Notify /></TraySlot>
        <Clock>4:19 PM<br />3/7/2016</Clock>
      </Tray>
    </Taskbar>
  </Shell>
);

export default App;
